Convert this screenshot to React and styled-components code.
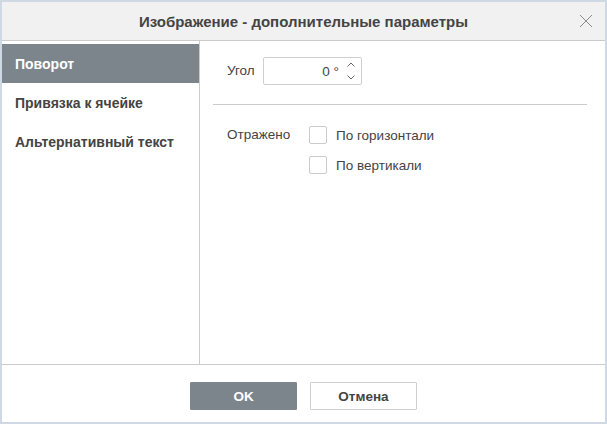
import React, {useState} from 'react';
import styled, {createGlobalStyle} from 'styled-components';

const GlobalStyle = createGlobalStyle`
  html, body { margin: 0; padding: 0; background: #fff; }
  body { font-family: "Liberation Sans", Arial, sans-serif; color: #444; }
`

const Window = styled.div`
  box-sizing: border-box;
  width: 607px;
  height: 424px;
  border: 2px solid #cfd9e4;
  display: flex;
  flex-direction: column;
  background: #fff;
`

const Header = styled.div`
  height: 38px;
  flex: none;
  background: #f1f1f1;
  border-bottom: 1px solid #cbcbcb;
  display: flex;
  align-items: center;
  justify-content: center;
  position: relative;
  font-size: 15px;
  font-weight: bold;
  color: #444;
`

const CloseButton = styled.button`
  position: absolute;
  right: 12px;
  top: 12px;
  width: 14px;
  height: 14px;
  padding: 0;
  border: none;
  background: none;
  cursor: pointer;
  display: flex;
`

const Body = styled.div`
  flex: 1;
  display: flex;
  min-height: 0;
`

const Sidebar = styled.div`
  width: 197px;
  flex: none;
  border-right: 1px solid #cbcbcb;
  padding-top: 3px;
  display: flex;
  flex-direction: column;
`

const NavItem = styled.div`
  height: 39px;
  display: flex;
  align-items: center;
  padding-left: 13px;
  font-size: 14px;
  font-weight: bold;
  color: ${p => p.active ? '#fff' : '#444'};
  background: ${p => p.active ? '#7d858c' : 'transparent'};
  cursor: pointer;
`

const Content = styled.div`
  flex: 1;
  padding: 16px 18px 0 13px;
  display: flex;
  flex-direction: column;
`

const Row = styled.div`
  display: flex;
  align-items: ${p => p.top ? 'flex-start' : 'center'};
  padding-left: 14px;
  font-size: 13.5px;
`

const Label = styled.span`
  width: ${p => p.width}px;
  flex: none;
  line-height: 18px;
`

const SpinInput = styled.div`
  box-sizing: border-box;
  width: 99px;
  height: 28px;
  border: 1px solid #cfcfcf;
  border-radius: 2px;
  display: flex;
  align-items: center;
  justify-content: flex-end;
  padding-right: 5px;
  font-size: 13.5px;
  color: #444;
`

const Arrows = styled.div`
  width: 10px;
  margin-left: 7px;
  display: flex;
  flex-direction: column;
  align-items: center;
  gap: 8px;
`

const Separator = styled.div`
  height: 1px;
  background: #cbcbcb;
  margin: 19px 0 21px;
`

const CheckList = styled.div`
  display: flex;
  flex-direction: column;
  gap: 12px;
`

const CheckRow = styled.label`
  display: flex;
  align-items: center;
  cursor: pointer;
`

const Box = styled.span`
  box-sizing: border-box;
  width: 18px;
  height: 18px;
  border: 1px solid #cbcbcb;
  border-radius: 2px;
  margin-right: 9px;
  display: flex;
  align-items: center;
  justify-content: center;
`

const Footer = styled.div`
  height: 58px;
  flex: none;
  border-top: 1px solid #cbcbcb;
  display: flex;
  justify-content: center;
  align-items: center;
  gap: 13px;
  padding: 5px 0 0 0;
  box-sizing: border-box;
`

const Button = styled.button`
  box-sizing: border-box;
  width: 107px;
  height: 28px;
  border-radius: 1px;
  font-family: "Liberation Sans", Arial, sans-serif;
  font-size: 13.5px;
  font-weight: bold;
  cursor: pointer;
  color: ${p => p.primary ? '#fff' : '#444'};
  background: ${p => p.primary ? '#7d858c' : '#fff'};
  border: 1px solid ${p => p.primary ? '#7d858c' : '#cfcfcf'};
`

const tabs = ['Поворот', 'Привязка к ячейке', 'Альтернативный текст'];

const Check = ({checked, label, onToggle}) => (
  <CheckRow onClick={onToggle}>
    <Box>
      {checked && (
        <svg width="10" height="8" viewBox="0 0 10 8">
          <path d="M1 4l3 3 5-6" fill="none" stroke="#444" strokeWidth="1.5" />
        </svg>
      )}
    </Box>
    {label}
  </CheckRow>
)

const App = () => {
  const [tab, setTab] = useState(0);
  const [flip, setFlip] = useState({h: false, v: false});

  return (
    <>
      <GlobalStyle />
      <Window>
        <Header>
          Изображение - дополнительные параметры
          <CloseButton>
            <svg width="14" height="14" viewBox="0 0 14 14">
              <path d="M1 1l12 12M13 1L1 13" stroke="#8a8a8a" strokeWidth="1" />
            </svg>
          </CloseButton>
        </Header>
        <Body>
          <Sidebar>
            {tabs.map((t, i) => (
              <NavItem key={t} active={i === tab} onClick={() => setTab(i)}>{t}</NavItem>
            ))}
          </Sidebar>
          <Content>
            <Row>
              <Label width={36}>Угол</Label>
              <SpinInput>
                0 °
                <Arrows>
                  <svg width="8" height="5" viewBox="0 0 8 5">
                    <path d="M0.5 4.5l3.5-3.5 3.5 3.5" fill="none" stroke="#666" strokeWidth="1" />
                  </svg>
                  <svg width="8" height="5" viewBox="0 0 8 5">
                    <path d="M0.5 0.5l3.5 3.5 3.5-3.5" fill="none" stroke="#666" strokeWidth="1" />
                  </svg>
                </Arrows>
              </SpinInput>
            </Row>
            <Separator />
            <Row top>
              <Label width={82}>Отражено</Label>
              <CheckList>
                <Check checked={flip.h} label="По горизонтали" onToggle={() => setFlip({...flip, h: !flip.h})} />
                <Check checked={flip.v} label="По вертикали" onToggle={() => setFlip({...flip, v: !flip.v})} />
              </CheckList>
            </Row>
          </Content>
        </Body>
        <Footer>
          <Button primary>OK</Button>
          <Button>Отмена</Button>
        </Footer>
      </Window>
    </>
  )
}

export default App;
